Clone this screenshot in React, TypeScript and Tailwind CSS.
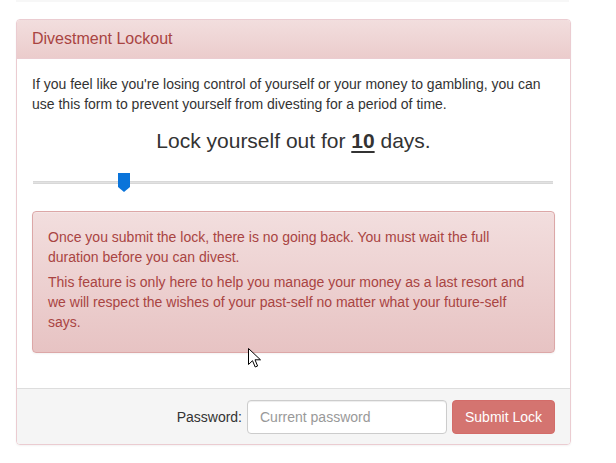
export default function App() {
  return (
    <div className="relative min-h-[463px] bg-white font-['Liberation_Sans',Arial,sans-serif] text-[14px] leading-[20px] text-[#333]">
      {/* bottom edge of the panel above */}
      <div className="ml-4 w-[553px] h-[2px] bg-[#f7f7f7]" />

      <div className="ml-4 mt-[17px] w-[555px] rounded border border-[#ebccd1] shadow-[0_1px_2px_rgba(0,0,0,0.05)]">
        <div className="rounded-t-[3px] border-b border-[#ebccd1] bg-gradient-to-b from-[#f2dede] to-[#ebcccc] px-[15px] py-[10px] text-[16px] leading-[18px] text-[#a94442]">
          Divestment Lockout
        </div>

        <div className="flex flex-col px-[15px] pt-[15px] pb-[15px]">
          <p>
            If you feel like you're losing control of yourself or your money to gambling, you can use this form to prevent yourself from divesting for a period of time.
          </p>
          <h3 className="mt-[15px] text-center text-[21px] leading-[23px] text-[#333]">
            Lock yourself out for <strong className="underline underline-offset-[3px] decoration-2">10</strong> days.
          </h3>

          <div className="relative mt-[21px] h-[20px]">
            <div className="absolute left-[1px] right-[2px] top-[8px] h-[3px] bg-[#e2e2e2] border-y border-[#d8d8d8]" />
            <svg className="absolute left-[86px] top-0" width="12" height="19" viewBox="0 0 12 19">
              <path d="M0 0H12V14L6 19L0 14Z" fill="#0a74da" />
            </svg>
          </div>

          <div className="mt-[18px] mb-[20px] rounded border border-[#dca7a7] bg-gradient-to-b from-[#f2dede] to-[#e7c3c3] px-[15px] pt-[15px] pb-[20px] text-[#a94442] shadow-[inset_0_1px_0_rgba(255,255,255,0.25),0_1px_2px_rgba(0,0,0,0.05)]">
            <p>Once you submit the lock, there is no going back. You must wait the full duration before you can divest.</p>
            <p className="mt-[5px]">This feature is only here to help you manage your money as a last resort and we will respect the wishes of your past-self no matter what your future-self says.</p>
          </div>
        </div>

        <div className="flex items-center justify-end gap-[5px] rounded-b-[3px] border-t border-[#ddd] bg-[#f5f5f5] px-[15px] pt-[11px] pb-[10px]">
          <label>Password:</label>
          <input
            type="password"
            placeholder="Current password"
            className="h-[34px] w-[200px] rounded border border-[#ccc] bg-white px-[12px] text-[14px] text-[#555] placeholder:text-[#999] shadow-[inset_0_1px_1px_rgba(0,0,0,0.075)] outline-none"
          />
          <button className="h-[34px] w-[103px] rounded border border-[#d36c69] bg-[#d47470] text-[14px] text-white">
            Submit Lock
          </button>
        </div>
      </div>

      {/* mouse cursor */}
      <svg className="absolute left-[248px] top-[348px]" width="13" height="20" viewBox="0 0 13 20">
        <path d="M0.5 0.5V16.5L4.5 12.7L7.2 19L9.6 18L7 11.8H12.5Z" fill="#fff" stroke="#000" strokeWidth="1" strokeLinejoin="round" />
      </svg>
    </div>
  );
}
